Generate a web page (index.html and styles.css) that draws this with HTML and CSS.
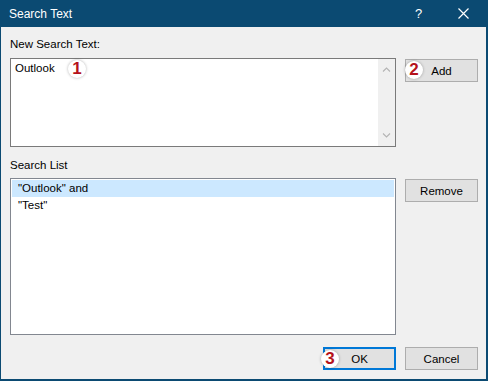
FILE: index.html
```html
<!doctype html>
<html>
<head>
  <title>Search Text</title>
  <link rel="stylesheet" href="styles.css">
</head>
<body>
  <div class="window">
    <header class="titlebar">
      <span class="title">Search Text</span>
      <span class="caption-btn help">?</span>
      <span class="caption-btn close">
        <svg width="11" height="11" viewBox="0 0 11 11"><path d="M0.5 0.5 L10.5 10.5 M10.5 0.5 L0.5 10.5" stroke="#fff" stroke-width="1.2" fill="none"/></svg>
      </span>
    </header>

    <main class="content">
      <div class="label">New Search Text:</div>
      <div class="row">
        <div class="textbox">
          <div class="value">Outlook</div>
          <span class="badge badge-1">1</span>
          <!-- vertical scrollbar of the edit box -->
          <div class="scrollbar">
            <svg width="9" height="6" viewBox="0 0 9 6"><path d="M1 4.5 L4.5 1 L8 4.5" stroke="#b4b4b4" stroke-width="1.1" fill="none"/></svg>
            <svg width="9" height="6" viewBox="0 0 9 6"><path d="M1 1.5 L4.5 5 L8 1.5" stroke="#b4b4b4" stroke-width="1.1" fill="none"/></svg>
          </div>
        </div>
        <div class="side">
          <button class="btn">Add</button>
          <span class="badge badge-2">2</span>
        </div>
      </div>

      <div class="label list-label">Search List</div>
      <div class="row">
        <ul class="listbox">
          <li class="selected">"Outlook" and</li>
          <li>"Test"</li>
        </ul>
        <div class="side">
          <button class="btn">Remove</button>
        </div>
      </div>

      <div class="footer">
        <div class="ok-wrap">
          <button class="btn primary">OK</button>
          <span class="badge badge-3">3</span>
        </div>
        <button class="btn">Cancel</button>
      </div>
    </main>
  </div>
</body>
</html>
```

FILE: styles.css
```css
* {
  box-sizing: border-box;
  margin: 0;
  padding: 0;
}

body {
  font-family: "Liberation Sans", Arial, sans-serif;
  font-size: 11.5px;
  color: #000;
  background: #f0f0f0;
}

.window {
  width: 488px;
  height: 381px;
  background: #f0f0f0;
  border-left: 1px solid #0b4a72;
  border-right: 2px solid #0b4a72;
  border-bottom: 2px solid #0b4a72;
}

.titlebar {
  display: flex;
  align-items: center;
  height: 27px;
  background: #0b4a72;
  color: #fff;
}

.title {
  flex: 1;
  padding-left: 8px;
  font-size: 12px;
}

.caption-btn {
  width: 46px;
  height: 27px;
  display: flex;
  align-items: center;
  justify-content: center;
}

.help { font-size: 13px; padding-left: 3px; }

.content {
  padding: 9px 8px 0 9px;
}

.label {
  line-height: 16px;
  margin-bottom: 6px;
}

.list-label {
  margin-top: 10px;
  margin-bottom: 5px;
}

.row {
  display: flex;
  gap: 9px;
}

.side {
  width: 73px;
  position: relative;
}

.textbox {
  flex: 1;
  height: 89px;
  background: #fff;
  border: 1px solid #7a7a7a;
  position: relative;
}

.value {
  padding: 1px 0 0 4px;
  line-height: 16px;
}

.scrollbar {
  position: absolute;
  top: 0;
  right: 0;
  bottom: 0;
  width: 17px;
  background: #f0f0f0;
  display: flex;
  flex-direction: column;
  justify-content: space-between;
  align-items: center;
  padding: 8px 0 8px;
}

.btn {
  display: block;
  width: 73px;
  height: 23px;
  margin-top: 1px;
  background: #e1e1e1;
  border: 1px solid #adadad;
  font-family: inherit;
  font-size: 11.5px;
  color: #000;
}

.btn.primary {
  margin-top: 0;
  border: 2px solid #0078d7;
}

.listbox {
  flex: 1;
  height: 157px;
  list-style: none;
  background: #fff;
  border: 1px solid #828790;
  padding: 1px;
}

.listbox li {
  height: 17px;
  line-height: 17px;
  padding-left: 6px;
}

.listbox li.selected { background: #cce8ff; }

.footer {
  display: flex;
  justify-content: flex-end;
  gap: 9px;
  margin-top: 12px;
}

.footer .btn { margin-top: 0; }

.ok-wrap { position: relative; }

.badge {
  position: absolute;
  width: 18px;
  height: 18px;
  border-radius: 50%;
  background: #fff;
  box-shadow: 0 0 3px rgba(0, 0, 0, 0.3);
  color: #b5121b;
  font-weight: 700;
  font-size: 17px;
  line-height: 18px;
  text-align: center;
}

.badge-1 { left: 57px; top: 1px; }
.badge-2 { left: 0; top: 3px; }
.badge-3 { left: -2px; top: 3px; }
```
